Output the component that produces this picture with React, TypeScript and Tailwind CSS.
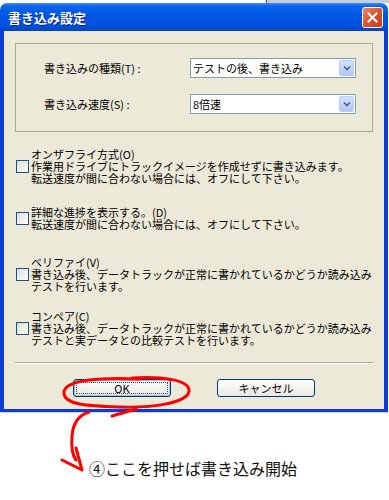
import React from 'react';

const options = [
  {
    lines: ['オンザフライ方式(O)', '作業用ドライブにトラックイメージを作成せずに書き込みます。', '転送速度が間に合わない場合には、オフにして下さい。'],
    mt: 'mt-[16px]',
  },
  {
    lines: ['詳細な進捗を表示する。(D)', '転送速度が間に合わない場合には、オフにして下さい。'],
    mt: 'mt-[22px]',
  },
  {
    lines: ['ベリファイ(V)', '書き込み後、データトラックが正常に書かれているかどうか読み込み', 'テストを行います。'],
    mt: 'mt-[26px]',
  },
  {
    lines: ['コンペア(C)', '書き込み後、データトラックが正常に書かれているかどうか読み込み', 'テストと実データとの比較テストを行います。'],
    mt: 'mt-[18px]',
  },
];

function Combo({ value }: { value: string }) {
  return (
    <div className="flex h-[20px] w-[166px] items-center justify-between border border-[#7F9DB9] bg-white pl-[2px] pr-[1px]">
      <span className="text-[11px] leading-none text-black">{value}</span>
      <div className="flex h-[16px] w-[15px] items-center justify-center rounded-[2px] border border-[#B9CDF8] bg-gradient-to-b from-[#D3E0FD] to-[#B3C7F6]">
        <svg width="8" height="6" viewBox="0 0 8 6">
          <path d="M1 1.5 L4 4.5 L7 1.5" stroke="#4D6185" strokeWidth="1.6" fill="none" />
        </svg>
      </div>
    </div>
  );
}

function Checkbox() {
  return (
    <div className="h-[13px] w-[13px] shrink-0 border border-[#1C5180] bg-gradient-to-br from-[#DCDCD7] to-white" />
  );
}

export default function App() {
  return (
    <div className="relative h-[500px] w-[389px] overflow-hidden bg-white font-['Noto_Sans_CJK_JP',sans-serif] text-black">
      {/* desktop strip above the window */}
      <div className="flex h-[3px]">
        <div className="w-[266px] bg-white" />
        <div className="w-px bg-[#4A4A4A]" />
        <div className="flex-1 bg-[#C6CED9]" />
      </div>

      <div className="w-[388px]">
        {/* title bar */}
        <div className="flex h-[28px] items-center justify-between rounded-t-[7px] bg-[linear-gradient(to_bottom,#3A8CF6_0%,#0C63EC_12%,#0057E5_45%,#0052DE_80%,#0046C6_100%)] pl-[8px] pr-[5px]">
          <span className="text-[13px] font-bold leading-none text-white [text-shadow:1px_1px_0_#0A1E8A]">書き込み設定</span>
          <div className="flex h-[21px] w-[21px] items-center justify-center rounded-[3px] border border-white bg-gradient-to-br from-[#EB8A6A] via-[#D9502C] to-[#C23E1D]">
            <svg width="11" height="11" viewBox="0 0 11 11">
              <path d="M1.5 1.5 L9.5 9.5 M9.5 1.5 L1.5 9.5" stroke="white" strokeWidth="2" strokeLinecap="square" />
            </svg>
          </div>
        </div>

        {/* body */}
        <div className="border-x-4 border-b-[3px] border-[#0B3CD6] bg-[#ECE9D8] pb-[12px] pt-[12px]">
          <div className="ml-[11px] w-[358px] border border-[#ACA899] pb-[17px] pl-[28px] pt-[14px]">
            <div className="flex items-center">
              <span className="w-[146px] text-[11px] leading-none">書き込みの種類(T) :</span>
              <Combo value="テストの後、書き込み" />
            </div>
            <div className="mt-[16px] flex items-center">
              <span className="w-[146px] text-[11px] leading-none">書き込み速度(S) :</span>
              <Combo value="8倍速" />
            </div>
          </div>

          {options.map((o) => (
            <div key={o.lines[0]} className={o.mt + ' flex items-center gap-[2px] pl-[12px]'}>
              <Checkbox />
              <div className="text-[11px] leading-[12px]">
                {o.lines.map((l) => (
                  <div key={l} className="whitespace-nowrap">{l}</div>
                ))}
              </div>
            </div>
          ))}

          <div className="mx-[11px] mt-[16px] h-[2px] border-b border-t border-b-white border-t-[#ACA899]" />

          <div className="mt-[15px] flex gap-[46px] pl-[69px]">
            <button className="flex h-[18px] w-[98px] rounded-[3px] border border-[#003C74] bg-gradient-to-b from-white to-[#E8E7E0] p-[2px] text-[11px] leading-none shadow-[inset_0_0_0_1px_#9DBDEF]">
              <span className="flex flex-1 items-center justify-center border border-dotted border-[#444]">OK</span>
            </button>
            <button className="flex h-[18px] w-[98px] items-center justify-center rounded-[3px] border border-[#003C74] bg-gradient-to-b from-white to-[#E8E7E0] text-[11px] leading-none">
              キャンセル
            </button>
          </div>
        </div>
      </div>
      <div className="h-px w-[389px] bg-[#D4D4D4]" />

      <div className="ml-[89px] mt-[46px] text-[16px] leading-[18px] text-[#111]">④ここを押せば書き込み開始</div>

      {/* hand-drawn red annotation */}
      <svg className="pointer-events-none absolute left-0 top-0" width="389" height="500" viewBox="0 0 389 500">
        <g stroke="#FF0000" strokeWidth="3" fill="none" strokeLinecap="round" strokeLinejoin="round">
          <path d="M132 378 C162 376 190 380 189 391 C188 403 152 408 120 407 C88 406 63 405 64 392 C65 380 100 377 140 379" />
          <path d="M136 409 C126 412 118 414 112 416" />
          <path d="M89 412 C79 415 73 423 72 436 C71 448 73 456 76 460" />
          <path d="M62 460 L82 470 M76 448 L82 470" />
        </g>
      </svg>
    </div>
  );
}
